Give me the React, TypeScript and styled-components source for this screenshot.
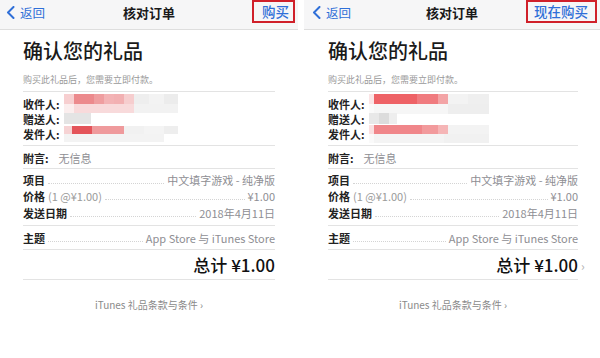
import styled, { createGlobalStyle } from "styled-components";

type Cell = [number, string];
type MosaicRows = { h: number; cells: Cell[] }[];

interface IPanel {
  buyLabel: string;
  padLeft: number;
  padRight: number;
  navLeft: number;
  chevron?: boolean;
  recipient: MosaicRows;
  giver: MosaicRows;
  sender: MosaicRows;
}

const GlobalStyle = createGlobalStyle`
  html, body {
    margin: 0;
    padding: 0;
    background: #ffffff;
    overflow: hidden;
  }
  body {
    font-family: "Noto Sans CJK SC", "Noto Sans", sans-serif;
    color: #1c1c1e;
  }
`;

const Page = styled.div`
  display: flex;
  gap: 6px;
  width: 600px;
  height: 358px;
  background: #ffffff;
`;

const Panel = styled.div<{ $w: number }>`
  width: ${(p) => p.$w}px;
  display: flex;
  flex-direction: column;
  background: #ffffff;
`;

const NavBar = styled.div<{ $left: number }>`
  height: 29px;
  padding: 0 3px 0 ${(p) => p.$left}px;
  background: #f6f6f7;
  border-bottom: 1px solid #dedede;
  display: flex;
  align-items: flex-start;
  position: relative;
  box-sizing: content-box;
`;

const Back = styled.div`
  display: flex;
  align-items: center;
  gap: 5px;
  height: 24px;
  color: #2f6fd8;
  font-size: 12.5px;
`;

const NavTitle = styled.div`
  position: absolute;
  left: 0;
  right: 0;
  top: 0;
  height: 25px;
  line-height: 25px;
  text-align: center;
  font-size: 13px;
  font-weight: 600;
  color: #1a1a1a;
  pointer-events: none;
`;

const BuyBox = styled.div<{ $pad: string }>`
  margin-left: auto;
  height: 19px;
  line-height: 19px;
  padding: ${(p) => p.$pad};
  border: 2px solid #d0202a;
  color: #2f6fd8;
  font-size: 13.5px;
  font-weight: 500;
`;

const Content = styled.div<{ $l: number; $r: number }>`
  padding: 0 ${(p) => p.$r}px 0 ${(p) => p.$l}px;
  display: flex;
  flex-direction: column;
`;

const Heading = styled.h1`
  margin: 9px 0 0;
  font-size: 20px;
  line-height: 24px;
  font-weight: 500;
  color: #1a1a1a;
`;

const Subtitle = styled.p`
  margin: 11px 0 0;
  font-size: 9px;
  line-height: 12px;
  color: #9a9a9a;
`;

const Section = styled.div<{ $top: number; $bottom: number }>`
  padding: ${(p) => p.$top}px 0 ${(p) => p.$bottom}px;
  border-top: 1px solid #e3e3e3;
  display: flex;
  flex-direction: column;
`;

const FirstSection = styled(Section)`
  margin-top: 5px;
`;

const Row = styled.div<{ $h: number }>`
  height: ${(p) => p.$h}px;
  display: flex;
  align-items: center;
  font-size: 11px;
  line-height: 14px;
`;

const Label = styled.span`
  font-weight: 700;
  color: #222222;
  white-space: nowrap;
`;

const Note = styled.span`
  color: #9a9a9a;
  margin-left: 3px;
  white-space: nowrap;
`;

const Leader = styled.span`
  flex: 1;
  align-self: center;
  margin: 6px 3px 0;
  border-bottom: 1px dotted #d4d4d4;
`;

const Value = styled.span<{ $gap?: number }>`
  color: #8e8e93;
  white-space: nowrap;
  margin-left: ${(p) => p.$gap ?? 0}px;
`;

const MosaicBox = styled.div`
  display: flex;
  flex-direction: column;
  margin-left: 4px;
  filter: blur(0.6px);
`;

const MosaicLine = styled.div<{ $h: number }>`
  display: flex;
  height: ${(p) => p.$h}px;
`;

const MosaicCell = styled.span<{ $w: number; $c: string }>`
  width: ${(p) => p.$w}px;
  background: ${(p) => p.$c};
`;

const TotalRow = styled.div`
  height: 24px;
  display: flex;
  justify-content: flex-end;
  align-items: center;
  font-size: 17px;
  font-weight: 500;
  color: #111111;
`;

const TotalChevron = styled.span`
  font-size: 12px;
  color: #b5b5b5;
  margin: 2px -10px 0 3px;
  width: 7px;
`;

const BottomLine = styled.div`
  border-top: 1px solid #e3e3e3;
`;

const Footer = styled.div`
  margin-top: 18px;
  text-align: center;
  font-size: 10px;
  line-height: 14px;
  color: #8a8a8a;
`;

function Mosaic({ rows }: { rows: MosaicRows }) {
  return (
    <MosaicBox>
      {rows.map((r, i) => (
        <MosaicLine key={i} $h={r.h}>
          {r.cells.map(([w, c], j) => (
            <MosaicCell key={j} $w={w} $c={c} />
          ))}
        </MosaicLine>
      ))}
    </MosaicBox>
  );
}

function BackChevron() {
  return (
    <svg width="9" height="13" viewBox="0 0 9 13">
      <path d="M7.5 1 L2 6.5 L7.5 12" fill="none" stroke="#2f6fd8" strokeWidth="2" strokeLinecap="round" strokeLinejoin="round" />
    </svg>
  );
}

function OrderPanel({ buyLabel, padLeft, padRight, navLeft, chevron, recipient, giver, sender }: IPanel) {
  const width = buyLabel.length > 2 ? 296 : 298;
  return (
    <Panel $w={width}>
      <NavBar $left={navLeft}>
        <Back>
          <BackChevron />
          返回
        </Back>
        <NavTitle>核对订单</NavTitle>
        <BuyBox $pad={buyLabel.length > 2 ? "0 7px 0 6px" : "0 4px 0 8px"}>{buyLabel}</BuyBox>
      </NavBar>
      <Content $l={padLeft} $r={padRight}>
        <Heading>确认您的礼品</Heading>
        <Subtitle>购买此礼品后，您需要立即付款。</Subtitle>

        <FirstSection $top={4} $bottom={4}>
          <Row $h={15}>
            <Label>收件人:</Label>
            <Mosaic rows={recipient} />
          </Row>
          <Row $h={15}>
            <Label>赠送人:</Label>
            <Mosaic rows={giver} />
          </Row>
          <Row $h={15}>
            <Label>发件人:</Label>
            <Mosaic rows={sender} />
          </Row>
        </FirstSection>

        <Section $top={4} $bottom={3}>
          <Row $h={15}>
            <Label>附言:</Label>
            <Value $gap={10}>无信息</Value>
          </Row>
        </Section>

        <Section $top={3} $bottom={3}>
          <Row $h={16}>
            <Label>项目</Label>
            <Leader />
            <Value>中文填字游戏 - 纯净版</Value>
          </Row>
          <Row $h={16}>
            <Label>价格</Label>
            <Note>(1 @¥1.00)</Note>
            <Leader />
            <Value>¥1.00</Value>
          </Row>
          <Row $h={18}>
            <Label>发送日期</Label>
            <Leader />
            <Value>2018年4月11日</Value>
          </Row>
        </Section>

        <Section $top={4} $bottom={3}>
          <Row $h={16}>
            <Label>主题</Label>
            <Leader />
            <Value>App Store 与 iTunes Store</Value>
          </Row>
        </Section>

        <Section $top={2} $bottom={3}>
          <TotalRow>
            总计 ¥1.00
            {chevron ? <TotalChevron>›</TotalChevron> : null}
          </TotalRow>
        </Section>
        <BottomLine />

        <Footer>iTunes 礼品条款与条件 ›</Footer>
      </Content>
    </Panel>
  );
}

const leftRecipient: MosaicRows = [
  {
    h: 10,
    cells: [
      [10, "#f7cfd0"],
      [20, "#ec8a8d"],
      [10, "#ef9ea0"],
      [10, "#f3b3b5"],
      [10, "#f2b0b2"],
      [10, "#f6cdce"],
      [15, "#eeeeee"],
      [15, "#f3f3f3"],
      [14, "#ececec"],
    ],
  },
  {
    h: 9,
    cells: [
      [10, "#fbeeee"],
      [60, "#f8dadb"],
      [44, "#f2f2f2"],
    ],
  },
];

const leftGiver: MosaicRows = [
  { h: 11, cells: [[27, "#e4e4e4"]] },
];

const leftSender: MosaicRows = [
  {
    h: 8,
    cells: [
      [8, "#f6d3d4"],
      [20, "#e4545a"],
      [32, "#ef9a9c"],
      [20, "#f1f1f1"],
      [20, "#f4f4f4"],
      [14, "#eeeeee"],
    ],
  },
  { h: 8, cells: [[100, "#f3f3f3"]] },
];

const rightRecipient: MosaicRows = [
  {
    h: 10,
    cells: [
      [5, "#fbe4e5"],
      [43, "#ee6266"],
      [21, "#f07b7f"],
      [10, "#f3a4a6"],
      [20, "#f3f3f3"],
      [21, "#efefef"],
    ],
  },
  {
    h: 10,
    cells: [
      [5, "#fafafa"],
      [74, "#f6f6f6"],
      [41, "#eeeeee"],
    ],
  },
];

const rightGiver: MosaicRows = [
  {
    h: 11,
    cells: [
      [10, "#e8e8e8"],
      [10, "#dcdcdc"],
      [8, "#eeeeee"],
    ],
  },
];

const rightSender: MosaicRows = [
  {
    h: 9,
    cells: [
      [5, "#fae0e1"],
      [48, "#f0868a"],
      [16, "#f29a9c"],
      [10, "#f5b5b6"],
      [41, "#f3f3f3"],
    ],
  },
  {
    h: 9,
    cells: [
      [5, "#fafafa"],
      [70, "#f4f4f4"],
      [45, "#f1f1f1"],
    ],
  },
];

export default function App() {
  return (
    <>
      <GlobalStyle />
      <Page>
        <OrderPanel
          buyLabel="购买"
          padLeft={23}
          padRight={23}
          navLeft={6}
          recipient={leftRecipient}
          giver={leftGiver}
          sender={leftSender}
        />
        <OrderPanel
          buyLabel="现在购买"
          padLeft={24}
          padRight={22}
          navLeft={8}
          chevron
          recipient={rightRecipient}
          giver={rightGiver}
          sender={rightSender}
        />
      </Page>
    </>
  );
}
